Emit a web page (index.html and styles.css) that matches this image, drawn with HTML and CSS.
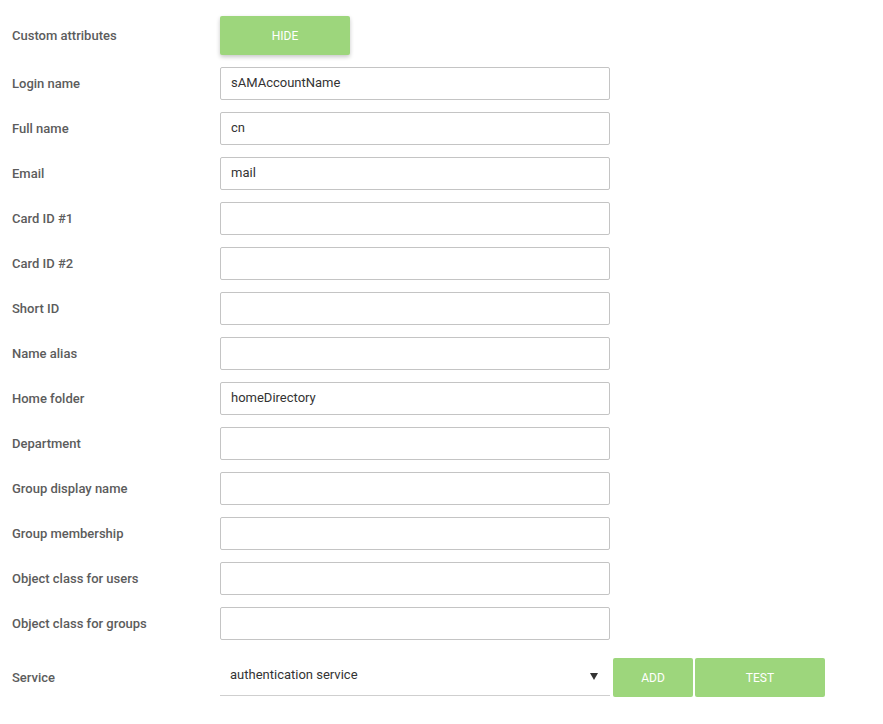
FILE: index.html
```html
<!DOCTYPE html>
<html>
<head>
<meta charset="utf-8">
<link rel="stylesheet" href="styles.css">
</head>
<body>
<div class="form">
  <div class="row row-btn">
    <div class="label">Custom attributes</div>
    <div class="field"><button class="btn btn-raised btn-wide">HIDE</button></div>
  </div>
  <div class="row"><div class="label">Login name</div><div class="field"><div class="input">sAMAccountName</div></div></div>
  <div class="row"><div class="label">Full name</div><div class="field"><div class="input">cn</div></div></div>
  <div class="row"><div class="label">Email</div><div class="field"><div class="input">mail</div></div></div>
  <div class="row"><div class="label">Card ID #1</div><div class="field"><div class="input"></div></div></div>
  <div class="row"><div class="label">Card ID #2</div><div class="field"><div class="input"></div></div></div>
  <div class="row"><div class="label">Short ID</div><div class="field"><div class="input"></div></div></div>
  <div class="row"><div class="label">Name alias</div><div class="field"><div class="input"></div></div></div>
  <div class="row"><div class="label">Home folder</div><div class="field"><div class="input">homeDirectory</div></div></div>
  <div class="row"><div class="label">Department</div><div class="field"><div class="input"></div></div></div>
  <div class="row"><div class="label">Group display name</div><div class="field"><div class="input"></div></div></div>
  <div class="row"><div class="label">Group membership</div><div class="field"><div class="input"></div></div></div>
  <div class="row"><div class="label">Object class for users</div><div class="field"><div class="input"></div></div></div>
  <div class="row"><div class="label">Object class for groups</div><div class="field"><div class="input"></div></div></div>
  <div class="row row-service">
    <div class="label">Service</div>
    <div class="field service">
      <div class="select"><span>authentication service</span><span class="caret"></span></div>
      <button class="btn btn-add">ADD</button>
      <button class="btn btn-wide">TEST</button>
    </div>
  </div>
</div>
</body>
</html>
```

FILE: styles.css
```css
html, body {
  margin: 0;
  padding: 0;
  background: #ffffff;
}
body {
  font-family: Roboto, "Liberation Sans", sans-serif;
}
.form {
  padding: 16px 0 0 12px;
  display: flex;
  flex-direction: column;
  gap: 12px;
}
.row {
  display: grid;
  grid-template-columns: 208px 390px;
  align-items: center;
}
.label {
  font-size: 13px;
  font-weight: 500;
  color: #5c5c5c;
}
.input {
  box-sizing: border-box;
  height: 33px;
  border: 1px solid #c4c4c4;
  border-radius: 2px;
  padding: 0 10px;
  font-size: 13px;
  color: #333333;
  line-height: 29px;
}
.btn {
  box-sizing: border-box;
  border: none;
  border-radius: 2px;
  background: #9dd67c;
  color: #ffffff;
  font-family: Roboto, "Liberation Sans", sans-serif;
  font-size: 12px;
  height: 39px;
  padding: 1px 0 0;
  cursor: pointer;
}
.btn-raised {
  box-shadow: 0 2px 4px rgba(0, 0, 0, 0.22);
}
.btn-wide {
  width: 130px;
}
.btn-add {
  width: 80px;
}
.row-service {
  margin-top: 6px;
  grid-template-columns: 208px auto;
}
.service {
  display: flex;
  align-items: center;
  gap: 2px;
}
.select {
  box-sizing: border-box;
  width: 390px;
  height: 37px;
  border-bottom: 1px solid #cfcfcf;
  display: flex;
  align-items: center;
  justify-content: space-between;
  padding: 0 12px 6px 10px;
  font-size: 13px;
  color: #333333;
  margin-right: 1px;
}
.caret {
  width: 0;
  height: 0;
  border-left: 4px solid transparent;
  border-right: 4px solid transparent;
  border-top: 7px solid #333333;
  margin-top: 4px;
}
```
